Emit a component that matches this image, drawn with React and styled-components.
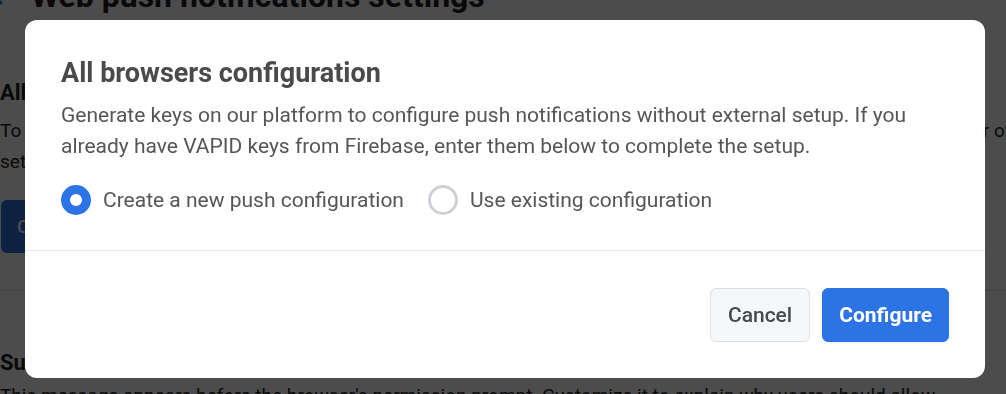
import React, { useState } from "react";
import styled, { createGlobalStyle } from "styled-components";

const GlobalStyle = createGlobalStyle`
  * { box-sizing: border-box; }
  html, body { margin: 0; padding: 0; background: #fff; }
  body {
    font-family: Roboto, "Liberation Sans", Arial, sans-serif;
    overflow: hidden;
  }
`;

/* ---------- page behind the dialog ---------- */

const Page = styled.main`
  width: 1006px;
  height: 394px;
  overflow: hidden;
  color: #1f1f1f;
`;

const PageHeader = styled.header`
  display: flex;
  align-items: center;
  gap: 21px;
  margin-top: -24px;
  margin-left: -14px;
  h1 {
    margin: 0;
    font-size: 32px;
    font-weight: 700;
    line-height: 40px;
  }
`;

const Section = styled.section`
  padding: ${(p) => p.$pad || "0"};
  margin-top: ${(p) => p.$gap || "0"};
  border-top: ${(p) => (p.$divided ? "1px solid #d9dce1" : "none")};
  h2 {
    margin: 0 0 ${(p) => p.$titleGap || "8px"};
    font-size: 22px;
    font-weight: 700;
    line-height: 28px;
  }
  p {
    margin: 0;
    font-size: 19px;
    line-height: 31px;
    white-space: nowrap;
  }
`;

const PageButton = styled.button`
  margin-top: 23px;
  margin-left: 1px;
  height: 53px;
  padding: 0 16px;
  border: none;
  border-radius: 6px;
  background: #2d6fe0;
  color: #fff;
  font: 500 19px Roboto, sans-serif;
`;

/* ---------- dialog ---------- */

const Overlay = styled.div`
  position: fixed;
  inset: 0;
  background: rgba(0, 0, 0, 0.7);
  padding: 20px 21px 16px 25px;
  display: flex;
`;

const Dialog = styled.div`
  flex: 1;
  background: #fff;
  border-radius: 12px;
  display: flex;
  flex-direction: column;
  overflow: hidden;
`;

const Body = styled.div`
  padding: 36px 36px 0;
  height: 231px;
  border-bottom: 1px solid #e8e9ec;
`;

const Title = styled.h3`
  margin: 0;
  font-size: 27px;
  line-height: 34px;
  font-weight: 700;
  color: #4a4a4a;
`;

const Description = styled.p`
  margin: 10px 0 0;
  font-size: 21px;
  line-height: 31px;
  color: #555658;
`;

const RadioGroup = styled.div`
  display: flex;
  align-items: center;
  gap: 24px;
  margin-top: 23px;
`;

const RadioLabel = styled.label`
  display: flex;
  align-items: center;
  gap: 12px;
  font-size: 21px;
  line-height: 30px;
  color: #555658;
  cursor: pointer;
`;

const RadioDot = styled.span`
  width: 30px;
  height: 30px;
  border-radius: 50%;
  flex-shrink: 0;
  border: ${(p) => (p.$checked ? "9px solid #2c73e6" : "3px solid #cdd0d5")};
  background: #fff;
`;

const Footer = styled.div`
  flex: 1;
  display: flex;
  justify-content: flex-end;
  align-items: flex-start;
  gap: 12px;
  padding: 37px 36px 0;
`;

const Button = styled.button`
  height: 54px;
  padding: 0 ${(p) => (p.$primary ? "16px" : "17px")};
  border-radius: 6px;
  font: ${(p) => (p.$primary ? 700 : 500)} 21px Roboto, "Liberation Sans", sans-serif;
  border: 1px solid ${(p) => (p.$primary ? "#2c73e6" : "#dcdfe4")};
  background: ${(p) => (p.$primary ? "#2c73e6" : "#f6f7f9")};
  color: ${(p) => (p.$primary ? "#fff" : "#45484d")};
  cursor: pointer;
`;

const BackIcon = () => (
  <svg width="24" height="24" viewBox="0 0 24 24" fill="none" stroke="#2d6fe0" strokeWidth="3" strokeLinecap="round" strokeLinejoin="round">
    <path d="M15 5l-7 7 7 7" />
  </svg>
);

const options = [
  { id: "new", label: "Create a new push configuration" },
  { id: "existing", label: "Use existing configuration" },
];

export default function App() {
  const [choice, setChoice] = useState("new");

  return (
    <>
      <GlobalStyle />
      <Page>
        <PageHeader>
          <BackIcon />
          <h1>Web push notifications settings</h1>
        </PageHeader>
        <Section $pad="63px 0 0">
          <h2>All browsers</h2>
          <p>To send web push notifications to all browsers, configure your VAPID keys. You can generate them with us or use your own keys</p>
          <p>set up in an external service.</p>
          <PageButton>Configure</PageButton>
        </Section>
        <Section $divided $gap="37px" $pad="58px 0 0" $titleGap="3px">
          <h2>Subscription settings</h2>
          <p>This message appears before the browser's permission prompt. Customize it to explain why users should allow</p>
        </Section>
      </Page>

      <Overlay>
        <Dialog role="dialog" aria-modal="true">
          <Body>
            <Title>All browsers configuration</Title>
            <Description>
              Generate keys on our platform to configure push notifications without external setup. If you
              already have VAPID keys from Firebase, enter them below to complete the setup.
            </Description>
            <RadioGroup>
              {options.map((o) => (
                <RadioLabel key={o.id} onClick={() => setChoice(o.id)}>
                  <RadioDot $checked={choice === o.id} />
                  {o.label}
                </RadioLabel>
              ))}
            </RadioGroup>
          </Body>
          <Footer>
            <Button>Cancel</Button>
            <Button $primary>Configure</Button>
          </Footer>
        </Dialog>
      </Overlay>
    </>
  );
}
